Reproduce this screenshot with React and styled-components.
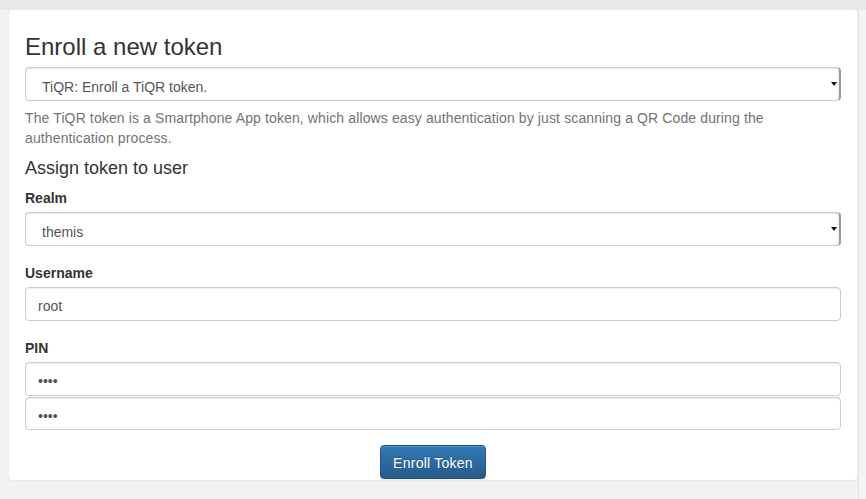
import React from "react";
import styled, { createGlobalStyle } from "styled-components";

const GlobalStyle = createGlobalStyle`
  html, body {
    margin: 0;
    padding: 0;
    background: #f2f2f2;
  }
  body {
    font-family: "Liberation Sans", Arial, sans-serif;
    font-size: 14px;
    line-height: 20px;
    color: #333;
  }
  * { box-sizing: border-box; }
`;

const Page = styled.div`
  display: flex;
  min-height: 499px;
  background: linear-gradient(to bottom, #e8e8e8 0, #e8e8e8 10px, #f2f2f2 10px);
`;

const Main = styled.div`
  flex: 1;
  padding: 10px 0 0 9px;
`;

const Scroller = styled.div`
  width: 8px;
  margin-top: 10px;
  border-left: 1px solid #e2e2e2;
  background: #f4f4f4;
`;

const Card = styled.div`
  background: #fff;
  border-radius: 4px;
  box-shadow: 0 1px 2px rgba(0, 0, 0, 0.06);
  padding: 24px 16px 1px 16px;
  width: 848px;
`;

const Title = styled.h3`
  margin: 0 0 7px 0;
  font-size: 24px;
  line-height: 26px;
  font-weight: 400;
  color: #333;
`;

const SubTitle = styled.h4`
  margin: 10px 0 10px 0;
  font-size: 18px;
  line-height: 20px;
  font-weight: 400;
  color: #333;
`;

const Help = styled.p`
  margin: 7px 0 0 0;
  color: #737373;
  font-size: 14px;
  line-height: 20px;
  letter-spacing: 0.12px;
`;

const Group = styled.div`
  margin-bottom: ${(p) => (p.$last ? 0 : 17)}px;
  display: flex;
  flex-direction: column;
`;

const Label = styled.label`
  font-weight: 700;
  font-size: 14px;
  line-height: 20px;
  margin-bottom: 4px;
  color: #333;
`;

const Field = styled.input`
  display: block;
  width: 100%;
  height: ${(p) => p.$h || 34}px;
  padding: 8px 12px 4px 12px;
  font-family: inherit;
  font-size: 14px;
  color: #555;
  background: #fff;
  border: 1px solid #ccc;
  border-radius: 4px;
  box-shadow: inset 0 1px 1px rgba(0, 0, 0, 0.075);
  outline: none;
  margin-bottom: ${(p) => (p.$gap ? 1 : 0)}px;
`;

const SelectWrap = styled.div`
  position: relative;
  width: 100%;
`;

const Select = styled.select`
  appearance: none;
  -webkit-appearance: none;
  display: block;
  width: 100%;
  height: 34px;
  padding: 9px 12px 3px 16px;
  font-family: inherit;
  font-size: 14px;
  color: #555;
  background: #fff;
  border: 1px solid #ccc;
  border-right: 2px solid #9a9a9a;
  border-radius: 4px;
  box-shadow: inset 0 1px 1px rgba(0, 0, 0, 0.075), inset -2px 0 2px rgba(0, 0, 0, 0.06);
  outline: none;
`;

const Arrow = styled.span`
  position: absolute;
  right: 4px;
  top: 15px;
  width: 0;
  height: 0;
  border-left: 3px solid transparent;
  border-right: 3px solid transparent;
  border-top: 4px solid #111;
  pointer-events: none;
`;

const Actions = styled.div`
  display: flex;
  justify-content: center;
  margin-top: 15px;
`;

const Button = styled.button`
  font-family: inherit;
  font-size: 14px;
  line-height: 20px;
  padding: 7px 12px 5px 12px;
  letter-spacing: 0.25px;
  color: #fff;
  border: 1px solid #245580;
  border-radius: 4px;
  background-image: linear-gradient(to bottom, #337ab7 0, #265a88 100%);
  text-shadow: 0 -1px 0 rgba(0, 0, 0, 0.2);
  box-shadow: inset 0 1px 0 rgba(255, 255, 255, 0.15), 0 1px 1px rgba(0, 0, 0, 0.075);
  cursor: pointer;
`;

function Dropdown({ value }) {
  return (
    <SelectWrap>
      <Select value={value} onChange={() => {}}>
        <option value={value}>{value}</option>
      </Select>
      <Arrow />
    </SelectWrap>
  );
}

export default function App() {
  return (
    <>
      <GlobalStyle />
      <Page>
        <Main>
          <Card>
            <Title>Enroll a new token</Title>
            <Dropdown value="TiQR: Enroll a TiQR token." />
            <Help>
              The TiQR token is a Smartphone App token, which allows easy authentication by just scanning a QR Code during the
              authentication process.
            </Help>
            <SubTitle>Assign token to user</SubTitle>
            <Group>
              <Label>Realm</Label>
              <Dropdown value="themis" />
            </Group>
            <Group>
              <Label>Username</Label>
              <Field type="text" defaultValue="root" />
            </Group>
            <Group $last>
              <Label>PIN</Label>
              <Field type="password" defaultValue="test" $gap />
              <Field type="password" defaultValue="test" $h={33} />
            </Group>
            <Actions>
              <Button>Enroll Token</Button>
            </Actions>
          </Card>
        </Main>
        <Scroller />
      </Page>
    </>
  );
}
